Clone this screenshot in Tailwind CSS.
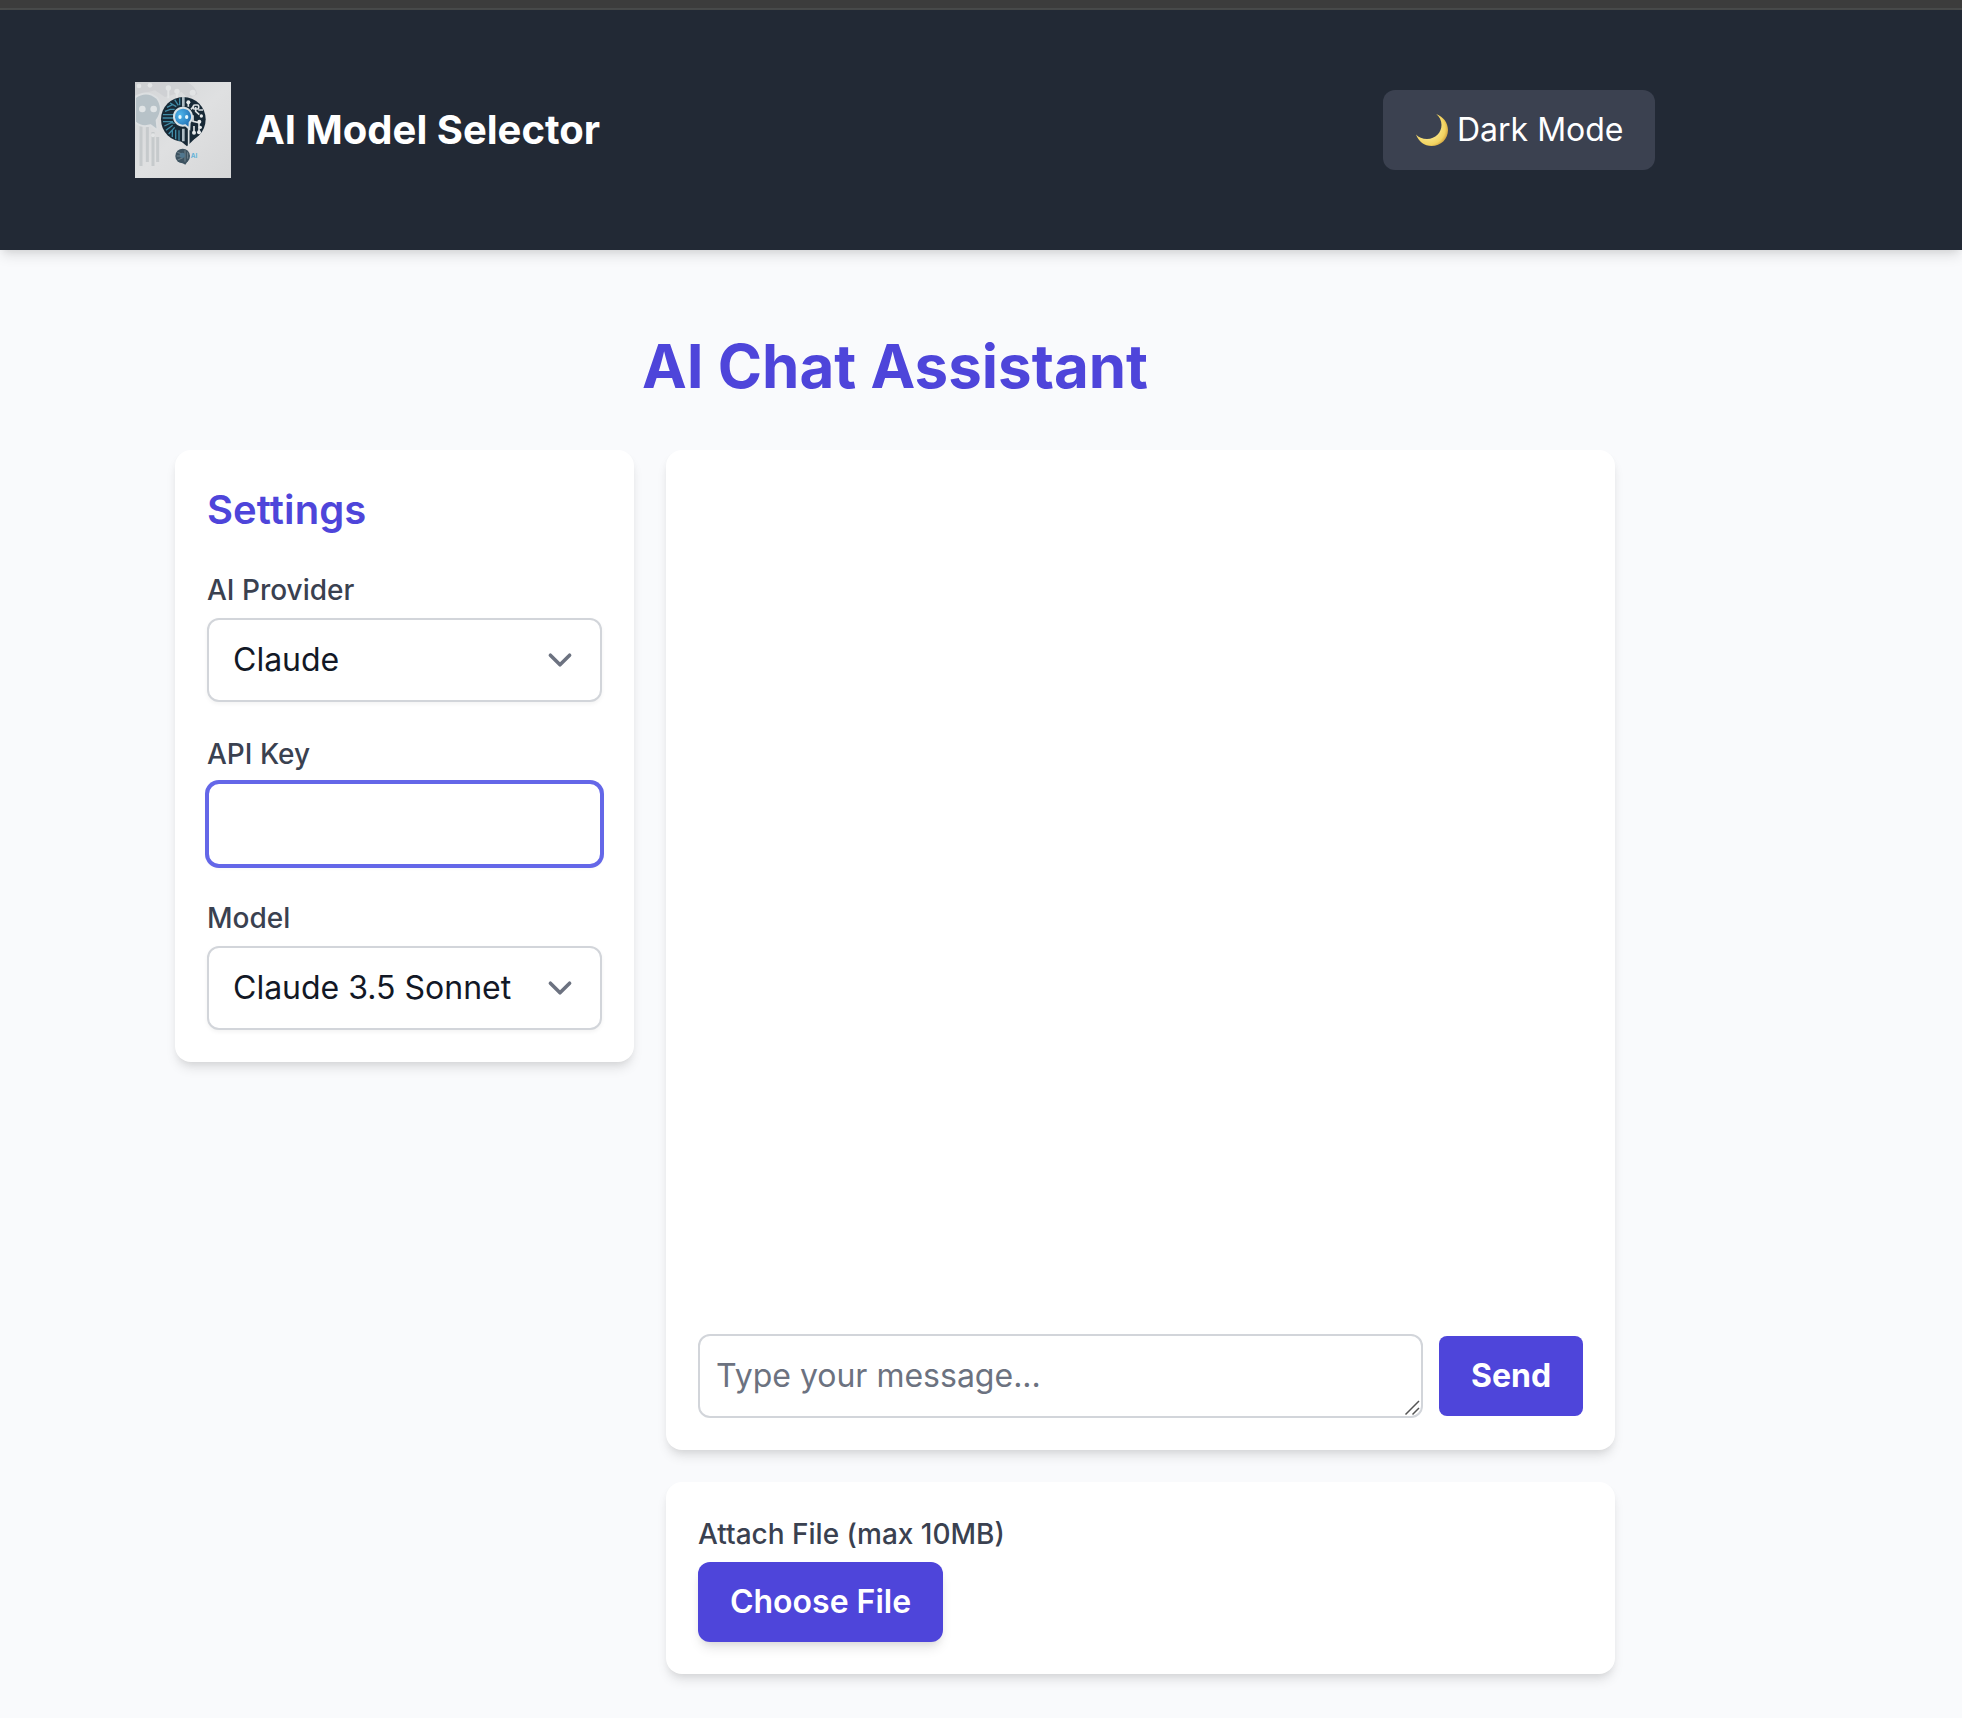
<!DOCTYPE html>
<html lang="en">
<head>
<meta charset="utf-8">
<title>AI Model Selector</title>
<script src="https://cdn.jsdelivr.net/npm/@tailwindcss/browser@4"></script>
</head>
<body class="h-[1718px] overflow-hidden bg-[#f9fafc] font-['Inter',sans-serif] text-[32px] leading-[48px] text-[#121826]">
<div class="h-[10px] border-b-2 border-[#484a4a] bg-[#3c3c3c]"></div>
<header class="flex h-[240px] items-center justify-between bg-[#222935] pr-[307px] pl-[135px] shadow-[0_8px_12px_-2px_rgba(0,0,0,0.1),0_4px_8px_-4px_rgba(0,0,0,0.1)]">
  <div class="flex items-center gap-6">
    <svg class="size-24" viewBox="0 0 288 288">
      <defs>
        <linearGradient id="paper" x1="0" y1="0" x2="1" y2="1"><stop offset="0" stop-color="#d3d5d7"/><stop offset=".5" stop-color="#dfe0e1"/><stop offset="1" stop-color="#d6d7d8"/></linearGradient>
        <radialGradient id="bot" cx=".35" cy=".35" r=".8"><stop offset="0" stop-color="#50b6ec"/><stop offset="1" stop-color="#1761a8"/></radialGradient>
      </defs>
      <rect width="288" height="288" fill="url(#paper)"/>
      <g fill="none" stroke="#c6cacc" stroke-width="9">
        <path d="M18 130V252M37 135V240M54 150V252M68 165V240"/>
      </g>
      <path d="M0 0H155Q180 10 187 36L160 50L140 30L90 45L60 25L0 40Z" fill="#c9cccf" opacity=".6"/>
      <g fill="#e2e4e5"><circle cx="12" cy="12" r="7"/><circle cx="45" cy="10" r="7"/><circle cx="100" cy="18" r="8"/><circle cx="126" cy="28" r="8"/><circle cx="173" cy="32" r="9"/><circle cx="54" cy="160" r="6"/><path d="M97 15h6v34h-6zM123 26h6v26h-6z"/></g>
      <path d="M0 46Q35 22 66 48Q90 80 65 115L68 146L47 130Q20 138 0 121Z" fill="#b7c2c8" stroke="#dcdfe1" stroke-width="6"/>
      <circle cx="22" cy="81" r="10" fill="#e0e4e6"/><circle cx="56" cy="81" r="10" fill="#e0e4e6"/>
      <circle cx="145" cy="112" r="67" fill="#172936"/>
      <path d="M130 172L156 193L190 160Z" fill="#172936"/>
      <g stroke="#418ba6" stroke-width="4" fill="none">
        <path d="M84 98H119M83 108H115M84 119H114M90 88L106 82H119M96 76L114 67M105 63L124 74M119 53L130 70M134 49V70M88 132L109 122L119 124M93 145L113 130M101 156L119 136M112 165V144M122 172V143M132 176V145"/>
      </g>
      <path d="M145 45V74M145 140V178" stroke="#aebcc4" stroke-width="8"/>
      <g stroke="#dce1e3" stroke-width="5" fill="none">
        <path d="M160 58V74M176 73L168 82M182 75V88L193 98M174 100V118L192 122V150M161 135V196M177 132V153M190 84H204"/>
        <rect x="175" y="69" width="16" height="12" rx="4"/>
      </g>
      <g fill="#e6eaeb"><circle cx="160" cy="61" r="6"/><circle cx="199" cy="102" r="5"/><circle cx="193" cy="119" r="6"/><circle cx="177" cy="152" r="6"/><circle cx="192" cy="151" r="6"/><circle cx="196" cy="136" r="5"/></g>
      <path d="M145 77A27 27 0 1 0 151 130L163 140L164 122A27 27 0 0 0 145 77Z" fill="url(#bot)" stroke="#d8e1e5" stroke-width="6"/>
      <ellipse cx="135" cy="105" rx="5" ry="6" fill="#e9faff"/><ellipse cx="155" cy="105" rx="5" ry="6" fill="#e9faff"/>
      <circle cx="143" cy="222" r="22" fill="#3d5361"/>
      <path d="M138 241L151 248L162 232Z" fill="#3d5361"/>
      <path d="M127 211L142 216M125 222H143M128 234L144 227M150 205V239M158 211V230" stroke="#71838d" stroke-width="3"/>
      <circle cx="142" cy="220" r="8" fill="#50778f"/>
      <text x="167" y="229" font-family="Inter,sans-serif" font-size="19" font-weight="700" fill="#62b3d9">AI</text>
    </svg>
    <span class="text-[40px] leading-[56px] font-bold text-white">AI Model Selector</span>
  </div>
  <button class="flex h-20 w-[272px] items-center rounded-xl bg-[#3b4150] pl-8 text-white">
    <svg class="mr-[9px] h-8 w-[33px] shrink-0" viewBox="0 0 33 32">
      <defs><radialGradient id="moon" cx=".4" cy=".45" r=".6"><stop offset=".5" stop-color="#f8e384"/><stop offset=".85" stop-color="#f2d360"/><stop offset="1" stop-color="#d6aa45"/></radialGradient></defs>
      <path d="M21.2 0C28.5 2.7 33 8.9 33 16C33 25 26 32 16.500 32C9.500 32 3.600 27.500 1 20.500C3.500 23.300 7.500 25 12 25C20.500 25 26.500 18.500 26.500 11C26.500 6.500 24.500 2.700 21.200 0Z" fill="url(#moon)"/>
    </svg>
    <span class="whitespace-nowrap">Dark Mode</span>
  </button>
</header>
<main class="pt-20 pr-[347px] pl-[175px]">
  <h1 class="mb-12 text-center text-[60px] leading-[72px] font-bold text-[#4e45da]">AI Chat Assistant</h1>
  <div class="grid grid-cols-[459px_949px] items-start gap-8">
    <section class="rounded-2xl bg-white p-8 shadow-[0_8px_12px_-2px_rgba(0,0,0,0.1),0_4px_8px_-4px_rgba(0,0,0,0.1)]">
      <h2 class="mb-8 text-[40px] leading-[56px] font-semibold tracking-[0.1px] text-[#4e45da]">Settings</h2>
      <div class="flex flex-col gap-8">
        <div>
          <label class="mb-2 block text-[28px] leading-10 font-medium text-[#3a4150]">AI Provider</label>
          <div class="flex h-[84px] items-center justify-between rounded-xl border-2 border-[#d2d5da] bg-white pr-4 pl-6 shadow-[0_2px_4px_0_rgba(0,0,0,0.05)]">
            <span>Claude</span>
            <svg class="size-12" viewBox="0 0 20 20" fill="none" stroke="#6c7280" stroke-width="1.5" stroke-linecap="round" stroke-linejoin="round"><path d="m6 8 4 4 4-4"/></svg>
          </div>
        </div>
        <div>
          <label class="mb-2 block text-[28px] leading-10 font-medium text-[#3a4150]">API Key</label>
          <input type="password" class="block h-[84px] w-full rounded-xl border-2 border-[#6467e8] bg-white px-6 shadow-[0_0_0_2px_#6467e8,0_2px_4px_0_rgba(0,0,0,0.05)] outline-none">
        </div>
        <div>
          <label class="mb-2 block text-[28px] leading-10 font-medium text-[#3a4150]">Model</label>
          <div class="flex h-[84px] items-center justify-between rounded-xl border-2 border-[#d2d5da] bg-white pr-4 pl-6 shadow-[0_2px_4px_0_rgba(0,0,0,0.05)]">
            <span class="whitespace-nowrap">Claude 3.5 Sonnet</span>
            <svg class="size-12 shrink-0" viewBox="0 0 20 20" fill="none" stroke="#6c7280" stroke-width="1.5" stroke-linecap="round" stroke-linejoin="round"><path d="m6 8 4 4 4-4"/></svg>
          </div>
        </div>
      </div>
    </section>
    <div class="flex flex-col gap-8">
      <section class="flex h-[1000px] flex-col justify-end rounded-2xl bg-white p-8 shadow-[0_8px_12px_-2px_rgba(0,0,0,0.1),0_4px_8px_-4px_rgba(0,0,0,0.1)]">
        <div class="flex items-center gap-4">
          <div class="relative h-[84px] flex-1">
            <textarea class="block h-[84px] w-full resize-none overflow-hidden rounded-xl border-2 border-[#d2d5da] bg-white px-4 py-4 placeholder:text-[#6c7280]" placeholder="Type your message..."></textarea>
            <svg class="absolute right-[3px] bottom-[2px] size-4" viewBox="0 0 16 16" stroke="#555" stroke-width="1.5"><path d="M1.500 14.500L15 1M8.500 14.500L15 8"/></svg>
          </div>
          <button class="h-20 w-36 rounded-lg bg-[#4e45da] text-center font-bold text-white">Send</button>
        </div>
      </section>
      <section class="h-48 rounded-2xl bg-white p-8 shadow-[0_8px_12px_-2px_rgba(0,0,0,0.1),0_4px_8px_-4px_rgba(0,0,0,0.1)]">
        <label class="mb-2 block text-[28px] leading-10 font-medium text-[#3a4150]">Attach File (max 10MB)</label>
        <button class="h-20 w-[245px] rounded-xl bg-[#4e45da] text-center font-semibold whitespace-nowrap text-white shadow-[0_8px_12px_-2px_rgba(0,0,0,0.1),0_4px_8px_-4px_rgba(0,0,0,0.1)]">Choose File</button>
      </section>
    </div>
  </div>
</main>
</body>
</html>
